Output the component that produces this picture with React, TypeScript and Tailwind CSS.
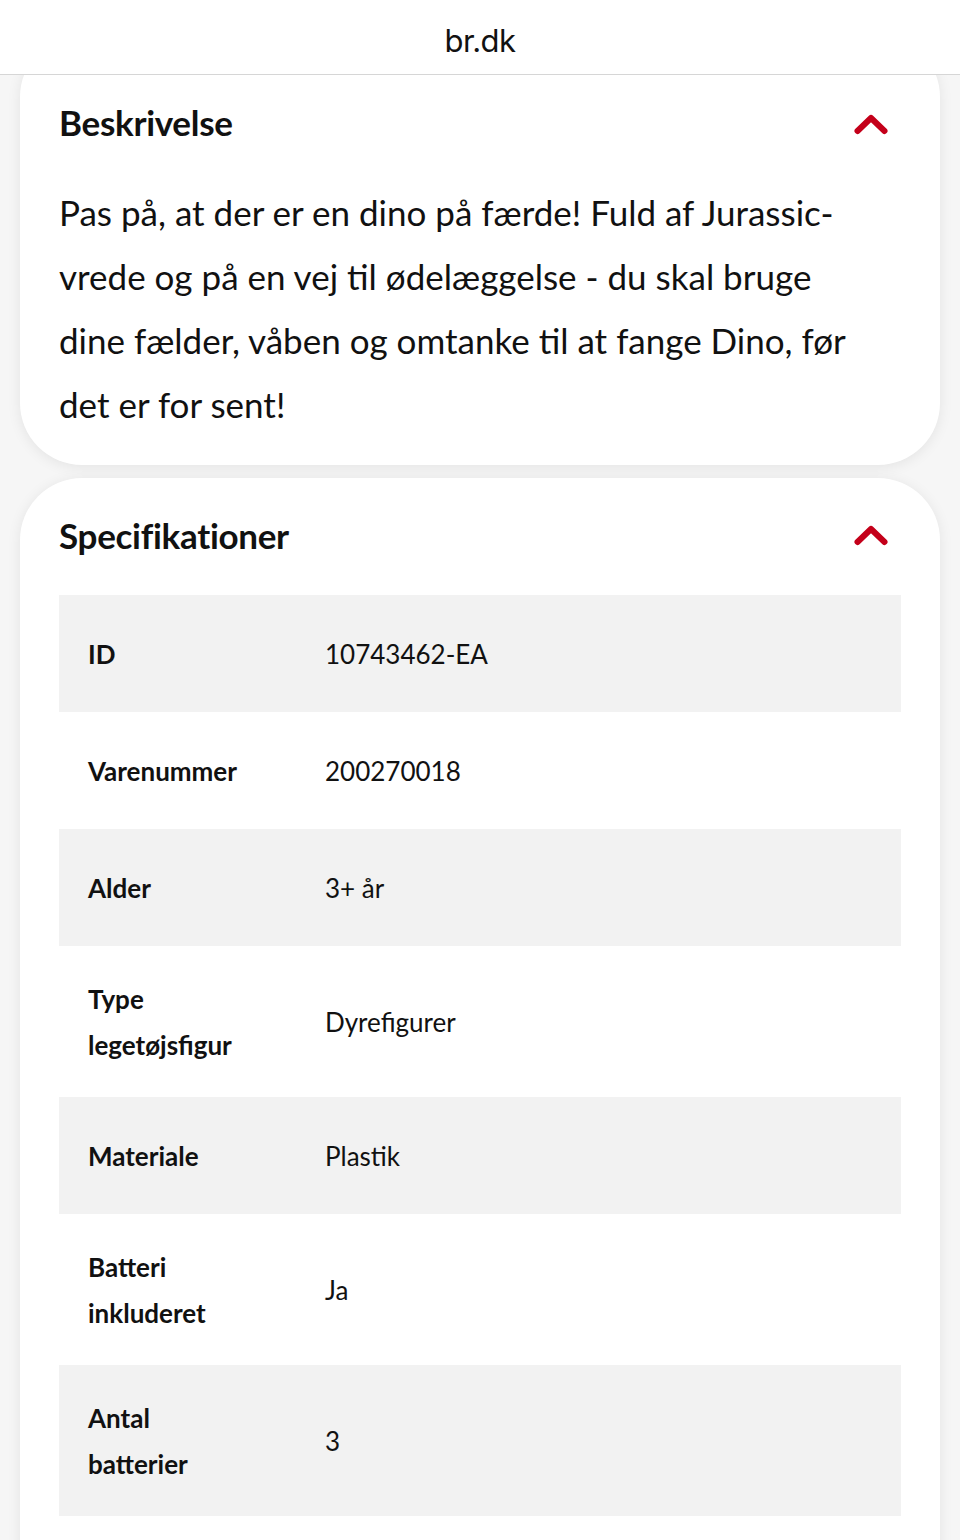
const description =
  "Pas på, at der er en dino på færde! Fuld af Jurassic-vrede og på en vej til ødelæggelse - du skal bruge dine fælder, våben og omtanke til at fange Dino, før det er for sent!";

interface Spec {
  label: string;
  value: string;
  tall?: boolean;
}

const specs: Spec[] = [
  { label: "ID", value: "10743462-EA" },
  { label: "Varenummer", value: "200270018" },
  { label: "Alder", value: "3+ år" },
  { label: "Type legetøjsfigur", value: "Dyrefigurer", tall: true },
  { label: "Materiale", value: "Plastik" },
  { label: "Batteri inkluderet", value: "Ja", tall: true },
  { label: "Antal batterier", value: "3", tall: true },
];

function ChevronUp() {
  return (
    <svg width="34" height="22" viewBox="0 0 34 22" fill="none">
      <path d="M3.5 18L17 5L30.5 18" stroke="#c4001a" strokeWidth="6" strokeLinecap="round" strokeLinejoin="round" />
    </svg>
  );
}

export default function App() {
  return (
    <div className="w-[960px] h-[1540px] overflow-hidden bg-[#f6f6f6] font-['Lato','Open_Sans',sans-serif] text-[#111]">
      <div className="relative z-10 h-[75px] bg-white border-b border-[#d6d6d6] flex items-center justify-center">
        <span className="text-[31px] font-['Inter',sans-serif] text-[#111] pt-[8px] tracking-[-0.5px]">br.dk</span>
      </div>

      <div className="px-[20px]">
        <div className="-mt-[40px] bg-white rounded-[62px] shadow-[0_2px_14px_rgba(0,0,0,0.08)] px-[39px] pt-[67px] pb-[29px]">
          <div className="flex items-center justify-between h-[40px]">
            <h2 className="text-[35px] font-bold tracking-[-0.3px]">Beskrivelse</h2>
            <div className="mr-[13px] mt-[3px]">
              <ChevronUp />
            </div>
          </div>
          <p className="mt-[38px] text-[35px] leading-[64px] pr-[27px]">{description}</p>
        </div>

        <div className="mt-[13px] bg-white rounded-t-[62px] shadow-[0_2px_14px_rgba(0,0,0,0.08)] px-[39px] pt-[37px] pb-[40px]">
          <div className="flex items-center justify-between h-[40px]">
            <h2 className="text-[35px] font-bold tracking-[-0.3px]">Specifikationer</h2>
            <div className="mr-[13px]">
              <ChevronUp />
            </div>
          </div>
          <div className="mt-[40px]">
            {specs.map((s, i) => (
              <div
                key={s.label}
                className={`flex items-center px-[29px] ${s.tall ? "h-[151px]" : "h-[117px]"} ${
                  i % 2 === 0 ? "bg-[#f2f2f2]" : "bg-white"
                }`}
              >
                <div className="w-[237px] pr-[77px] text-[26px] font-bold leading-[46px]">{s.label}</div>
                <div className="text-[26px] leading-[46px]">{s.value}</div>
              </div>
            ))}
          </div>
        </div>
      </div>
    </div>
  );
}
